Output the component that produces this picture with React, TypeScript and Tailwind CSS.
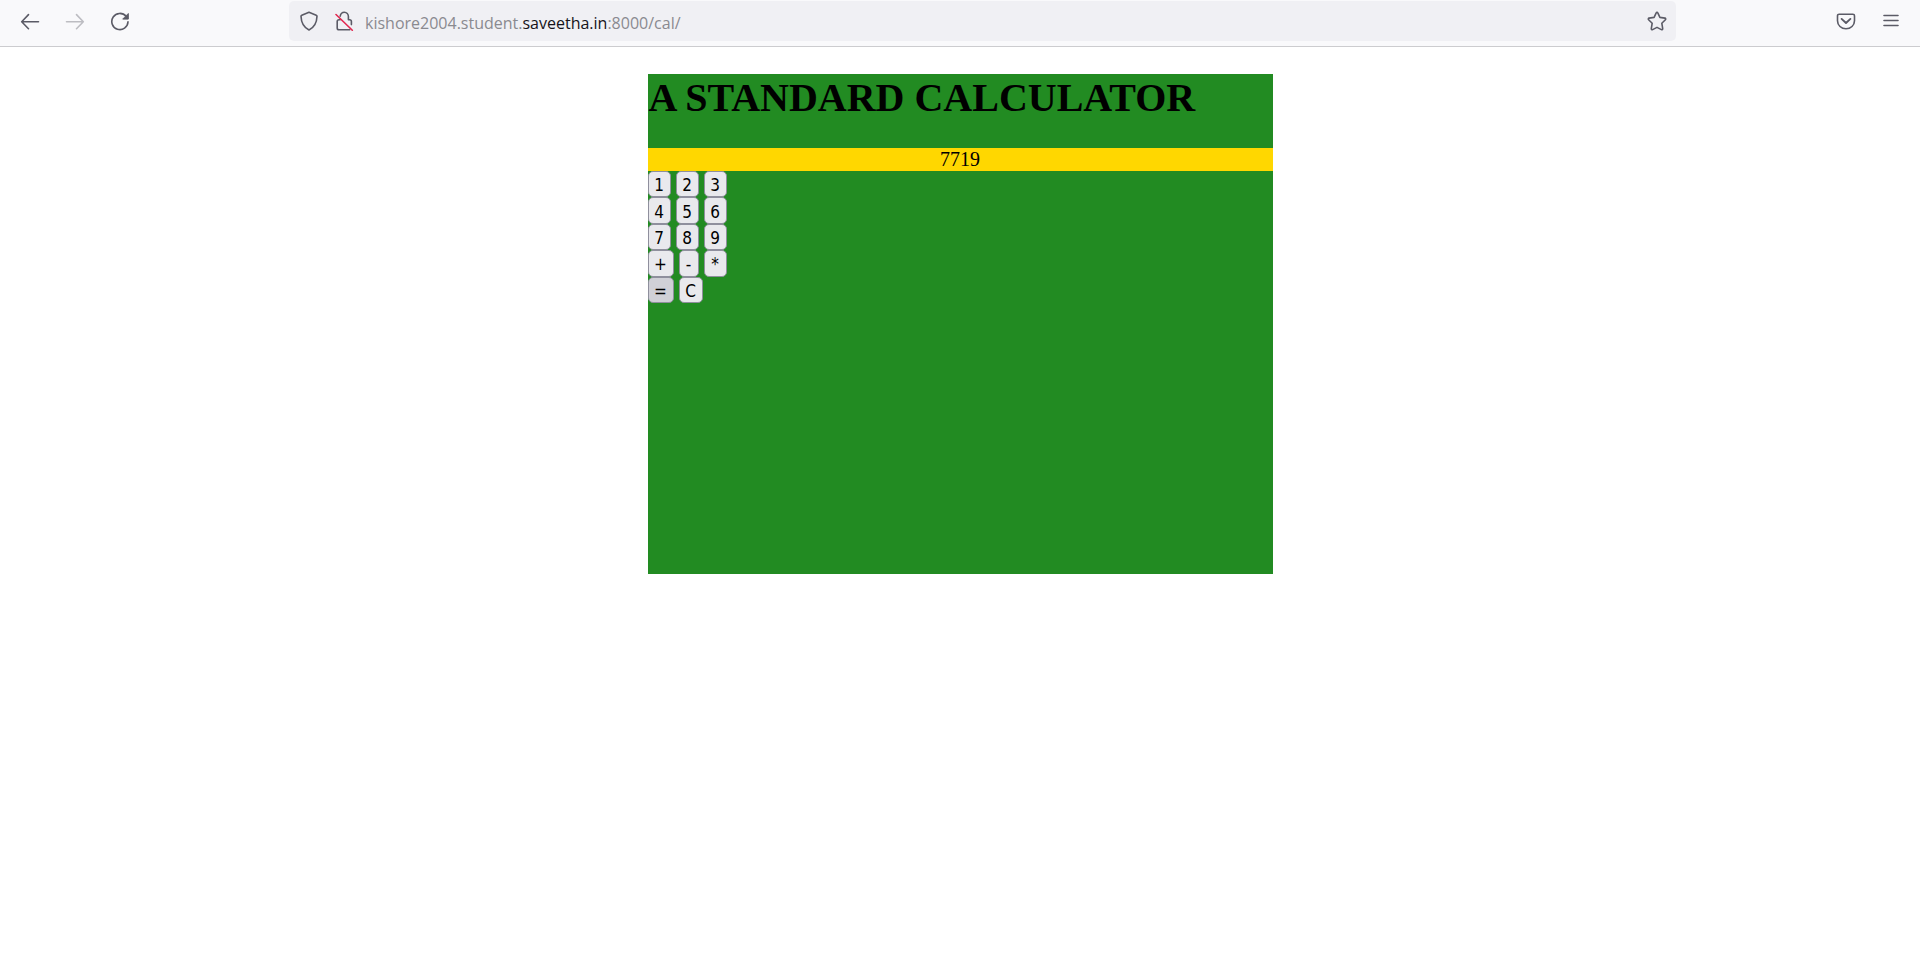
import { useState } from 'react';
import type { ReactNode } from 'react';

type Key = { label: string; width: string; shade?: string };

const rows: Key[][] = [
  [{ label: '1', width: 'w-[23px]' }, { label: '2', width: 'w-[23px]' }, { label: '3', width: 'w-[23px]' }],
  [{ label: '4', width: 'w-[23px]' }, { label: '5', width: 'w-[23px]' }, { label: '6', width: 'w-[23px]' }],
  [{ label: '7', width: 'w-[23px]' }, { label: '8', width: 'w-[23px]' }, { label: '9', width: 'w-[23px]' }],
  [{ label: '+', width: 'w-[26px]' }, { label: '-', width: 'w-5' }, { label: '*', width: 'w-[23px]' }],
  [{ label: '=', width: 'w-[26px]', shade: 'bg-[#d0d0d7]' }, { label: 'C', width: 'w-6' }],
];

function evaluate(text: string): string {
  const tokens = text.match(/\d+|[+\-*]/g) ?? [];
  const terms: number[] = [];
  let op = '+';
  for (const token of tokens) {
    if (/\d/.test(token)) {
      const value = Number(token);
      if (op === '*') terms.push((terms.pop() ?? 0) * value);
      else terms.push(op === '-' ? -value : value);
    } else {
      op = token;
    }
  }
  return String(terms.reduce((sum, value) => sum + value, 0));
}

function BarButton({ label, disabled, children }: { label: string; disabled?: boolean; children: ReactNode }) {
  return (
    <button type="button" aria-label={label} disabled={disabled} className="flex h-10 w-[45px] items-center justify-center text-[#5b5b66] disabled:text-[#bdbdc2]">
      {children}
    </button>
  );
}

const stroke = { fill: 'none', stroke: 'currentColor', strokeWidth: 1.6, strokeLinecap: 'round', strokeLinejoin: 'round' } as const;

function Toolbar() {
  return (
    <header className="flex h-[47px] border-b border-[#cccccf] bg-[#f9f9fb] px-[7px] pt-px">
      <nav className="flex" aria-label="History">
        <BarButton label="Back">
          <svg width="20" height="20" viewBox="0 0 20 20" {...stroke}>
            <path d="M18.5 10.7H2M8.5 3.6L1.700 10.700l6.800 7" />
          </svg>
        </BarButton>
        <BarButton label="Forward" disabled>
          <svg width="20" height="20" viewBox="0 0 20 20" {...stroke}>
            <path d="M1.5 10.7H18M11.5 3.6l6.800 7.100-6.800 7" />
          </svg>
        </BarButton>
        <BarButton label="Reload">
          <svg width="20" height="20" viewBox="0 0 20 20" {...stroke}>
            <path d="M16.1 5.3A8.1 8.1 0 1 0 18 10.8" />
            <path d="M18.3 2.9v5.2h-5.2z" fill="currentColor" strokeWidth="1" />
          </svg>
        </BarButton>
      </nav>
      <div className="mr-[147px] ml-[147px] flex h-10 min-w-0 flex-1 items-center rounded-[5px] bg-[#f0f0f4] pl-[10px] text-[#5b5b66]">
        <button type="button" aria-label="Tracking protection" className="flex size-5 items-center justify-center">
          <svg width="20" height="20" viewBox="0 0 20 20" {...stroke}>
            <path d="M10 1.3l7.2 2.9c.5.2.8.6.8 1.1C17.8 11.2 15.6 16.3 10 19 4.400 16.300 2.200 11.200 2 5.300c0-.5.300-.9.800-1.100z" />
          </svg>
        </button>
        <button type="button" aria-label="Connection not secure" className="ml-[15px] flex size-5 items-center justify-center">
          <svg width="20" height="20" viewBox="0 0 20 20" {...stroke}>
            <path d="M6.200 5.200C6.700 2.700 8.300 1.300 10.300 1.300c2.400 0 4.100 1.900 4.100 4.300v3.200h1.200c1 0 1.800.8 1.800 1.800v3M6.200 8.800H5c-1 0-1.800.8-1.800 1.800v6.400c0 1 .8 1.800 1.800 1.800h10.800" />
            <path d="M2 3.500L18.300 19.300" stroke="#e22850" />
          </svg>
        </button>
        <div className="ml-[11px] min-w-0 flex-1 truncate pt-[3px] font-['Open_Sans',sans-serif] text-[16px] leading-6 text-[#8a8a90]">
          kishore2004.student.<span className="text-[#15141a]">saveetha.in</span>:8000/cal/
        </div>
        <button type="button" aria-label="Bookmark this page" className="mr-[9px] flex size-5 items-center justify-center">
          <svg width="20" height="20" viewBox="0 0 20 20" {...stroke}>
            <path d="M9.200 1.900c.3-.7 1.300-.7 1.600 0l2.100 4.500 5 .7c.8.1 1.100 1 .5 1.600l-3.600 3.500.9 5.500c.1.700-.6 1.200-1.300.9L10 16.400l-4.400 2.200c-.7.3-1.400-.2-1.300-.9l.9-5.500L1.600 8.700C1 8.100 1.300 7.200 2.100 7.100l5-.7z" />
          </svg>
        </button>
      </div>
      <div className="flex">
        <BarButton label="Save to Pocket">
          <svg width="20" height="20" viewBox="0 0 20 20" {...stroke}>
            <path d="M3.100 3.200h13.800c.9 0 1.600.7 1.600 1.500v5.100c0 4.500-3.800 8-8.500 8s-8.500-3.500-8.500-8V4.700c0-.8.700-1.500 1.600-1.500z" />
            <path d="M5.600 7.900L10 12l4.400-4.100" strokeWidth="1.900" />
          </svg>
        </BarButton>
        <BarButton label="Open menu">
          <svg width="20" height="20" viewBox="0 0 20 20" {...stroke}>
            <path d="M3 4.500h14M3 9.500h14M3 14.500h14" />
          </svg>
        </BarButton>
      </div>
    </header>
  );
}

export default function App() {
  const [display, setDisplay] = useState('7719');

  const press = (label: string) => {
    if (label === 'C') setDisplay('');
    else if (label === '=') setDisplay(evaluate(display));
    else setDisplay(display + label);
  };

  return (
    <div className="min-h-screen bg-white text-black">
      <Toolbar />
      <main className="mx-auto mt-[27px] min-h-[500px] w-full max-w-[625px] bg-[#228b22] font-['Liberation_Serif',serif] text-[20px]">
        <h1 className="pb-[27px] pl-px text-[40px] leading-[47px] font-bold">A STANDARD CALCULATOR</h1>
        <output className="block h-[23px] bg-[#ffd700] text-center leading-[23px]">{display}</output>
        <div className="grid h-[132px] grid-rows-5">
          {rows.map((row) => (
            <div key={row[0].label} className="flex gap-[5px]">
              {row.map((key) => (
                <button
                  key={key.label}
                  type="button"
                  onClick={() => press(key.label)}
                  className={`flex items-center justify-center rounded-[5px] border border-[#8f8f9d] pt-0.5 font-['DejaVu_Sans_Condensed','DejaVu_Sans',sans-serif] text-[17px] leading-5 ${key.width} ${key.shade ?? 'bg-[#e9e9ed]'}`}
                >
                  {key.label}
                </button>
              ))}
            </div>
          ))}
        </div>
      </main>
    </div>
  );
}
